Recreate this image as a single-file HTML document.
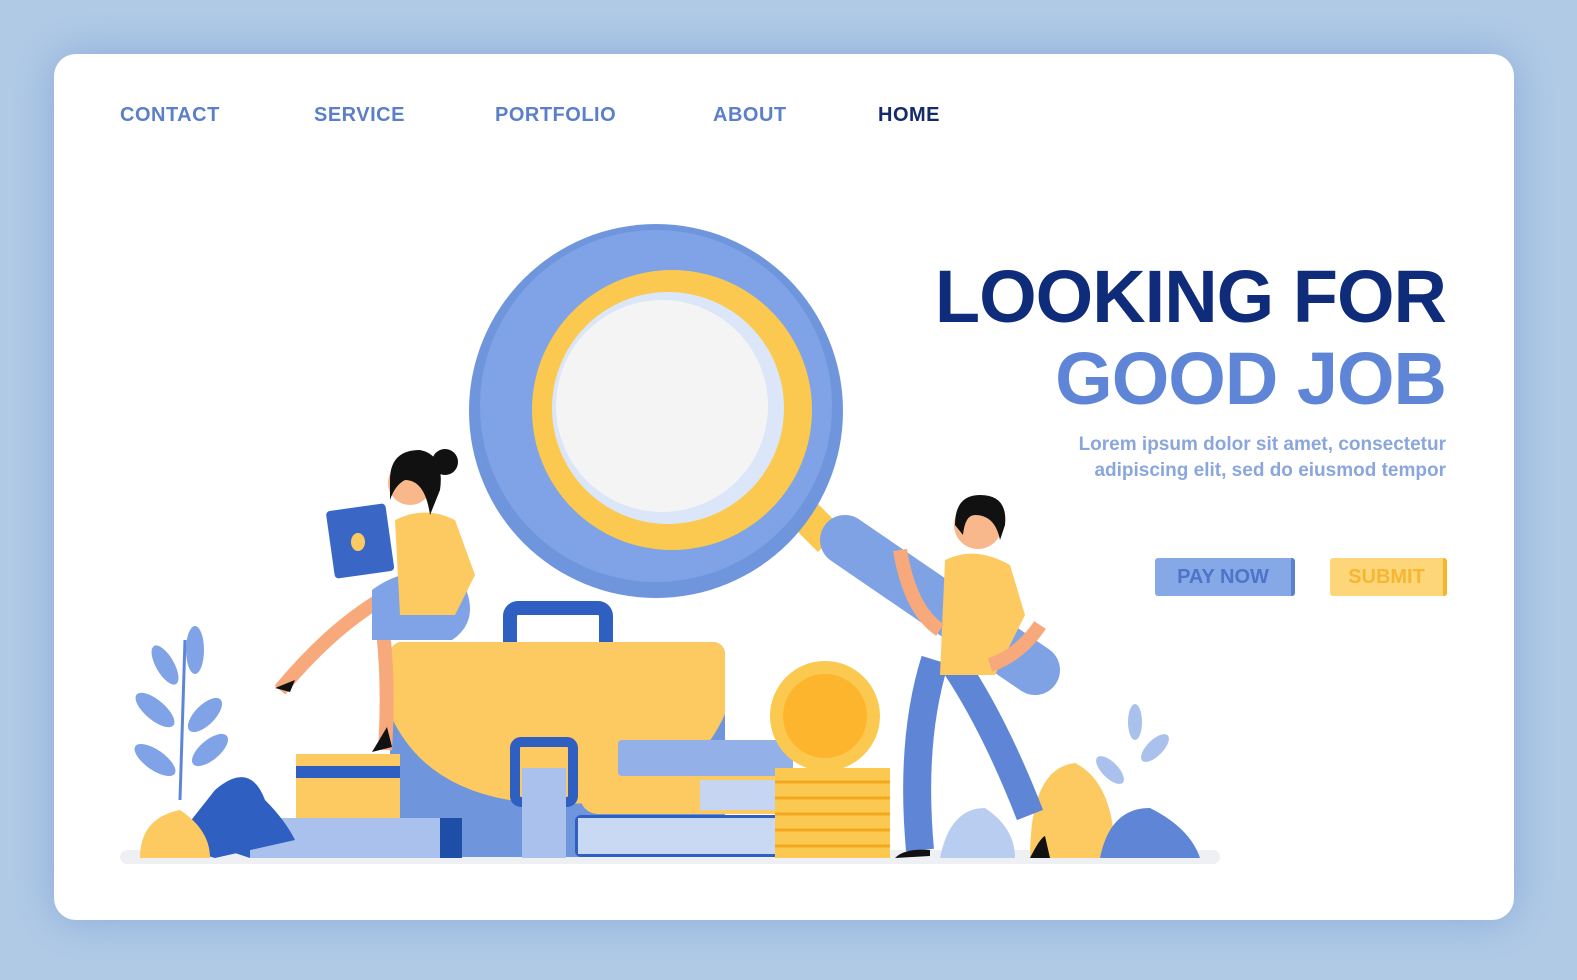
<!DOCTYPE html>
<html><head><meta charset="utf-8"><style>
*{margin:0;padding:0;box-sizing:border-box}
body{width:1577px;height:980px;background:#b0cae6;position:relative;overflow:hidden;font-family:"Liberation Sans",sans-serif}
.card{position:absolute;left:54px;top:54px;width:1460px;height:866px;background:#fff;border-radius:22px;box-shadow:0 0 40px rgba(90,130,200,.45)}
.nav{position:absolute;top:104px;font-weight:bold;font-size:20px;color:#5b7fc8;letter-spacing:0.5px}
.h1{position:absolute;right:131px;font-weight:bold;font-size:74px;letter-spacing:-1px;text-align:right;white-space:nowrap}
.p{position:absolute;right:131px;top:432px;text-align:right;color:#8aa6dc;font-weight:bold;font-size:19px;line-height:26px}
.btn{position:absolute;top:558px;height:38px;border-radius:3px;font-weight:bold;font-size:20px;text-align:center;line-height:38px}
</style></head><body>
<div class="card"></div>
<div class="nav" style="left:120px">CONTACT</div>
<div class="nav" style="left:314px">SERVICE</div>
<div class="nav" style="left:495px">PORTFOLIO</div>
<div class="nav" style="left:713px">ABOUT</div>
<div class="nav" style="left:878px;color:#132a6b">HOME</div>
<div class="h1" style="top:254px;color:#0f2c7a">LOOKING FOR</div>
<div class="h1" style="top:336px;color:#5f86d6">GOOD JOB</div>
<div class="p">Lorem ipsum dolor sit amet, consectetur<br>adipiscing elit, sed do eiusmod tempor</div>
<div class="btn" style="left:1155px;width:140px;background:#86a8e6;color:#4e74c9;border-right:4px solid #5a80d0">PAY NOW</div>
<div class="btn" style="left:1330px;width:117px;background:#fdd67a;color:#f5b733;border-right:4px solid #f4b62e">SUBMIT</div>
<svg width="1577" height="980" style="position:absolute;left:0;top:0">
<rect x="120" y="850" width="1100" height="14" rx="7" fill="#eef0f3"/>
<!-- magnifier handle -->
<line x1="790" y1="500" x2="830" y2="540" stroke="#fbc94f" stroke-width="34"/>
<line x1="845" y1="540" x2="1035" y2="670" stroke="#7fa2e4" stroke-width="50" stroke-linecap="round"/>
<!-- magnifier -->
<circle cx="656" cy="411" r="187" fill="#6f96dd"/>
<circle cx="656" cy="406" r="176" fill="#7fa3e6"/>
<circle cx="672" cy="410" r="140" fill="#fbc94f"/>
<circle cx="668" cy="408" r="116" fill="#dbe6f8"/>
<circle cx="662" cy="406" r="106" fill="#f4f4f4"/>
<!-- briefcase -->
<rect x="510" y="608" width="96" height="50" rx="8" fill="none" stroke="#2f5fc1" stroke-width="14"/>
<rect x="390" y="642" width="335" height="215" rx="12" fill="#6f96dd"/>
<path d="M390 654 a12 12 0 0 1 12-12 h311 a12 12 0 0 1 12 12 v60 q-40 90 -165 90 q-130 0 -170 -90z" fill="#fcca60"/>
<rect x="515" y="742" width="58" height="60" rx="6" fill="none" stroke="#2f5fc1" stroke-width="10"/>
<rect x="522" y="768" width="44" height="90" fill="#a9c1ec"/>
<!-- books -->
<rect x="618" y="740" width="175" height="36" rx="4" fill="#93b1e8"/>
<rect x="580" y="776" width="215" height="38" rx="18" fill="#fcca60"/>
<rect x="700" y="780" width="90" height="30" fill="#c6d6f2"/>
<rect x="575" y="815" width="240" height="42" rx="6" fill="#2f5fc1"/>
<rect x="578" y="818" width="230" height="36" fill="#c9d8f3"/>
<!-- card -->
<rect x="296" y="754" width="104" height="66" fill="#fcca60"/>
<rect x="296" y="766" width="104" height="12" fill="#2f5fc1"/>
<!-- pencil -->
<rect x="250" y="818" width="210" height="40" fill="#a9c1ec"/>
<rect x="440" y="818" width="22" height="40" fill="#1e4ea6"/>
<polygon points="250,818 190,838 250,858" fill="#2f5fc1"/>
<!-- coins -->
<circle cx="825" cy="716" r="55" fill="#fbc94f"/>
<circle cx="825" cy="716" r="42" fill="#fdb52e"/>
<rect x="775" y="768" width="115" height="90" fill="#fbc94f"/>
<g stroke="#f4a820" stroke-width="3"><line x1="775" y1="782" x2="890" y2="782"/><line x1="775" y1="798" x2="890" y2="798"/><line x1="775" y1="814" x2="890" y2="814"/><line x1="775" y1="830" x2="890" y2="830"/><line x1="775" y1="846" x2="890" y2="846"/></g>
<!-- plants -->
<g fill="#7fa3e6"><ellipse cx="195" cy="650" rx="9" ry="24"/><ellipse cx="165" cy="665" rx="9" ry="22" transform="rotate(-30 165 665)"/><ellipse cx="155" cy="710" rx="10" ry="24" transform="rotate(-50 155 710)"/><ellipse cx="205" cy="715" rx="10" ry="22" transform="rotate(45 205 715)"/><ellipse cx="155" cy="760" rx="10" ry="24" transform="rotate(-55 155 760)"/><ellipse cx="210" cy="750" rx="10" ry="22" transform="rotate(50 210 750)"/></g>
<path d="M185 640 L180 800" stroke="#5f86d6" stroke-width="3"/>
<path d="M215 790 q35 -30 50 10 q20 20 30 40 l-80 18 q-35 -10 -30 -30z" fill="#2f5fc1"/>
<path d="M140 858 q0 -40 40 -48 q30 20 30 48z" fill="#fcca60"/>
<path d="M1030 858 q0 -90 45 -95 q40 20 40 95z" fill="#fcca60"/>
<path d="M1100 858 q10 -50 50 -50 q40 20 50 50z" fill="#5f86d6"/>
<path d="M940 858 q10 -50 45 -50 q30 20 30 50z" fill="#b9cdf0"/>
<g fill="#a9c1ec"><ellipse cx="1135" cy="722" rx="7" ry="18"/><ellipse cx="1110" cy="770" rx="8" ry="18" transform="rotate(-45 1110 770)"/><ellipse cx="1155" cy="748" rx="8" ry="18" transform="rotate(45 1155 748)"/></g>
<!-- woman -->
<path d="M380 600 q-50 30 -100 90" stroke="#f8a97c" stroke-width="14" fill="none"/>
<path d="M380 610 q10 60 5 140" stroke="#f8a97c" stroke-width="14" fill="none"/>
<path d="M372 590 q40 -30 90 -10 q20 40 -10 60 h-80z" fill="#7fa3e6"/>
<path d="M395 520 q30 -15 60 0 l20 55 l-20 40 h-55z" fill="#fcca60"/>
<circle cx="410" cy="483" r="22" fill="#f8b88c"/>
<path d="M390 480 q0 -30 30 -30 q25 5 20 40 l-10 25 q-5 -35 -25 -35 q-10 5 -15 20z" fill="#111"/>
<circle cx="445" cy="462" r="13" fill="#111"/>
<rect x="330" y="507" width="60" height="68" rx="4" fill="#3a67c6" transform="rotate(-8 360 540)"/>
<ellipse cx="358" cy="542" rx="7" ry="9" fill="#fcca60"/>
<path d="M275 688 l20 -8 l-5 12z M372 752 l20 -5 l-5 -20z" fill="#111"/>
<!-- man -->
<path d="M935 660 q-25 80 -15 190 M955 665 q40 60 75 150" stroke="#5f86d6" stroke-width="28" fill="none"/>
<path d="M945 560 q30 -15 65 5 l15 50 l-30 60 h-55z" fill="#fcca60"/>
<circle cx="978" cy="525" r="24" fill="#f8b88c"/>
<path d="M955 525 q0 -30 25 -30 q28 0 25 30 l-5 15 q-5 -25 -25 -25 q-10 0 -12 20z" fill="#111"/>
<path d="M900 550 q10 60 40 80 M1040 625 q-20 30 -50 40" stroke="#f8a97c" stroke-width="14" fill="none"/>
<path d="M895 858 q10 -10 35 -8 v6z M1030 858 q10 -20 15 -22 l5 22z" fill="#111"/>
</svg>
</body></html>
